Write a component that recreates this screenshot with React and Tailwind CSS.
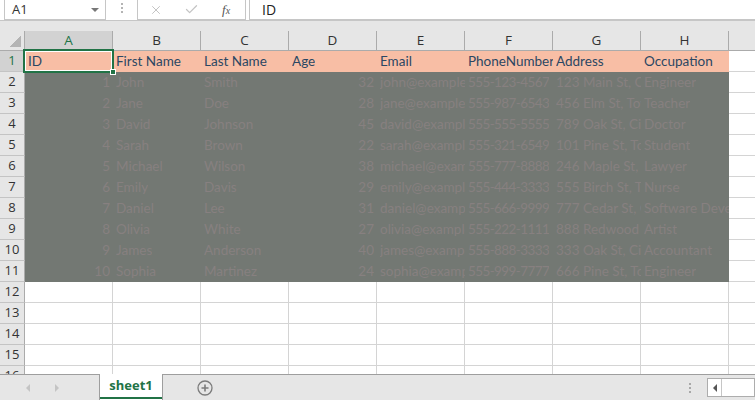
import { Check, X } from 'lucide-react';

const COLS = ['A', 'B', 'C', 'D', 'E', 'F', 'G', 'H'];

const HEADERS = ['ID', 'First Name', 'Last Name', 'Age', 'Email', 'PhoneNumber', 'Address', 'Occupation'];

const PEOPLE = [
  [1, 'John', 'Smith', 32, 'john@example.com', '555-123-4567', '123 Main St, City', 'Engineer'],
  [2, 'Jane', 'Doe', 28, 'jane@example.com', '555-987-6543', '456 Elm St, Town', 'Teacher'],
  [3, 'David', 'Johnson', 45, 'david@example.com', '555-555-5555', '789 Oak St, City', 'Doctor'],
  [4, 'Sarah', 'Brown', 22, 'sarah@example.com', '555-321-6549', '101 Pine St, Town', 'Student'],
  [5, 'Michael', 'Wilson', 38, 'michael@example.com', '555-777-8888', '246 Maple St, City', 'Lawyer'],
  [6, 'Emily', 'Davis', 29, 'emily@example.com', '555-444-3333', '555 Birch St, Town', 'Nurse'],
  [7, 'Daniel', 'Lee', 31, 'daniel@example.com', '555-666-9999', '777 Cedar St, City', 'Software Developer'],
  [8, 'Olivia', 'White', 27, 'olivia@example.com', '555-222-1111', '888 Redwood Ave, Town', 'Artist'],
  [9, 'James', 'Anderson', 40, 'james@example.com', '555-888-3333', '333 Oak St, City', 'Accountant'],
  [10, 'Sophia', 'Martinez', 24, 'sophia@example.com', '555-999-7777', '666 Pine St, Town', 'Engineer'],
];

const ui = { fontFamily: '"Open Sans", "Noto Sans", sans-serif' };
const cellFont = { fontFamily: 'Lato, "Noto Sans", sans-serif' };

// one 21px sheet row; kind = header | data | empty
const SheetRow = ({ num, cells, kind }) => {
  const selected = num === 1;
  return (
    <div className="flex h-[21px] shrink-0">
      <div
        className={`w-[25px] shrink-0 border-r border-b border-r-[#ababab] border-b-[#c4c4c4] flex items-center justify-center text-[13px] ${
          selected ? 'bg-[#d2d2d2] text-[#217346]' : 'bg-[#e6e6e6] text-[#333]'
        }`}
        style={ui}
      >
        {num}
      </div>
      {COLS.map((c, i) => {
        const v = cells ? cells[i] : '';
        const isNum = typeof v === 'number';
        // lato digits run wider than calibri's, so tighten the phone column
        const tight = kind === 'data' && c === 'F' ? 'tracking-[-0.6px]' : '';
        let cls = 'bg-white border-r border-b border-[#d4d4d4]';
        if (kind === 'header') cls = 'bg-[#f8bea5] text-[#2b4763]';
        if (kind === 'data') cls = 'bg-[#737873] text-[#878080]';
        return (
          <div
            key={c}
            className={`w-[88px] shrink-0 overflow-hidden flex items-end pb-[2px] ${
              isNum ? 'justify-end pr-[3px]' : 'pl-[3px]'
            } ${cls}`}
          >
            <span
              className={`block overflow-hidden whitespace-nowrap text-[13.5px] leading-[18px] ${tight}`}
              style={cellFont}
            >
              {v}
            </span>
          </div>
        );
      })}
      <div className="flex-1 bg-white border-b border-[#d4d4d4]" />
    </div>
  );
};

const FormulaBar = () => (
  <div className="h-[20px] shrink-0 bg-white flex items-stretch" style={ui}>
    <div className="ml-[4px] w-[102px] border-x border-b border-[#c6c6c6] flex items-center justify-between pl-[7px] pr-[6px] text-[13px] text-[#333]">
      <span>A1</span>
      <span className="w-0 h-0 border-l-[4px] border-r-[4px] border-t-[4px] border-l-transparent border-r-transparent border-t-[#777]" />
    </div>
    <div className="w-[31px] flex flex-col items-center justify-center gap-[2px] pb-[4px]">
      <span className="w-[2px] h-[2px] bg-[#b4b4b4]" />
      <span className="w-[2px] h-[2px] bg-[#b4b4b4]" />
      <span className="w-[2px] h-[2px] bg-[#b4b4b4]" />
    </div>
    <div className="w-[109px] border-x border-b border-[#c6c6c6] flex items-center">
      <X size={14} strokeWidth={1.5} className="ml-[11px] text-[#bcbcbc]" />
      <Check size={15} strokeWidth={2} className="ml-[21px] text-[#c4c4c4]" />
      <span className="ml-[23px] text-[#555] text-[13px] italic leading-none" style={{ fontFamily: '"Liberation Serif", serif' }}>
        f<span className="text-[10px]">x</span>
      </span>
    </div>
    <div className="ml-[3px] flex-1 border-l border-b border-[#c6c6c6] flex items-center pl-[12px] text-[14px] text-[#222]">
      ID
    </div>
  </div>
);

const ColumnHeaders = () => (
  <div className="flex h-[20px] shrink-0 bg-[#e6e6e6] border-b border-[#ababab]" style={ui}>
    <div className="w-[25px] shrink-0 border-r border-[#ababab] flex items-end justify-end pr-[3px] pb-[3px]">
      <span className="w-[12px] h-[11px] bg-[linear-gradient(to_bottom_right,transparent_50%,#b4b4b4_50%)]" />
    </div>
    {COLS.map(c => (
      <div
        key={c}
        className={`w-[88px] shrink-0 border-r border-[#ababab] flex items-center justify-center text-[13.5px] ${
          c === 'A' ? 'bg-[#d2d2d2] text-[#217346]' : 'text-[#333]'
        }`}
      >
        {c}
      </div>
    ))}
  </div>
);

const TabBar = () => (
  <div className="h-[26px] shrink-0 bg-[#e6e6e6] border-t border-[#9e9e9e] flex items-stretch" style={ui}>
    <div className="w-[99px] flex items-center">
      <span className="ml-[26px] w-0 h-0 border-y-[4px] border-r-[4px] border-y-transparent border-r-[#c4c4c4]" />
      <span className="ml-[25px] w-0 h-0 border-y-[4px] border-l-[4px] border-y-transparent border-l-[#c4c4c4]" />
    </div>
    <div className="-mt-px w-[64px] bg-white border-x border-[#9e9e9e] flex items-center justify-center relative">
      <span className="text-[13px] font-bold text-[#217346] pb-[3px]">sheet1</span>
      <span className="absolute left-0 right-0 bottom-[1px] h-[2px] bg-[#217346]" />
    </div>
    <div className="w-[83px] flex items-center justify-center">
      <svg width="16" height="16" viewBox="0 0 16 16">
        <circle cx="8" cy="8" r="7" fill="none" stroke="#7c7c7c" strokeWidth="1.3" />
        <path d="M8 4.5v7M4.5 8h7" stroke="#7c7c7c" strokeWidth="1.6" />
      </svg>
    </div>
    <div className="flex-1" />
    <div className="flex flex-col justify-center gap-[2px] mr-[16px]">
      <span className="w-[2px] h-[2px] bg-[#a8a8a8]" />
      <span className="w-[2px] h-[2px] bg-[#a8a8a8]" />
      <span className="w-[2px] h-[2px] bg-[#a8a8a8]" />
    </div>
    <div className="my-[3px] w-[48px] bg-white border border-[#adadad] flex items-stretch">
      <div className="w-[14px] border-r border-[#c6c6c6] flex items-center justify-center">
        <span className="w-0 h-0 border-y-[4px] border-r-[4px] border-y-transparent border-r-[#555]" />
      </div>
    </div>
  </div>
);

export default function App() {
  return (
    <div className="w-[755px] h-[400px] overflow-hidden flex flex-col bg-white relative">
      <FormulaBar />
      <div className="h-[11px] shrink-0 bg-[#e6e6e6] border-t border-[#c6c6c6]" />
      <ColumnHeaders />
      <div className="flex-1 overflow-hidden flex flex-col">
        <SheetRow num={1} cells={HEADERS} kind="header" />
        {PEOPLE.map((p, i) => (
          <SheetRow key={i} num={i + 2} cells={p} kind="data" />
        ))}
        {[12, 13, 14, 15, 16].map(n => (
          <SheetRow key={n} num={n} kind="empty" />
        ))}
      </div>
      <TabBar />

      {/* active cell A1 */}
      <div className="absolute left-[23px] top-[49px] w-[91px] h-[24px] border-2 border-[#217346] pointer-events-none">
        <div className="absolute inset-0 border border-white" />
        <div className="absolute right-[-4px] bottom-[-4px] w-[6px] h-[6px] bg-[#217346] border border-white" />
      </div>
    </div>
  );
}
